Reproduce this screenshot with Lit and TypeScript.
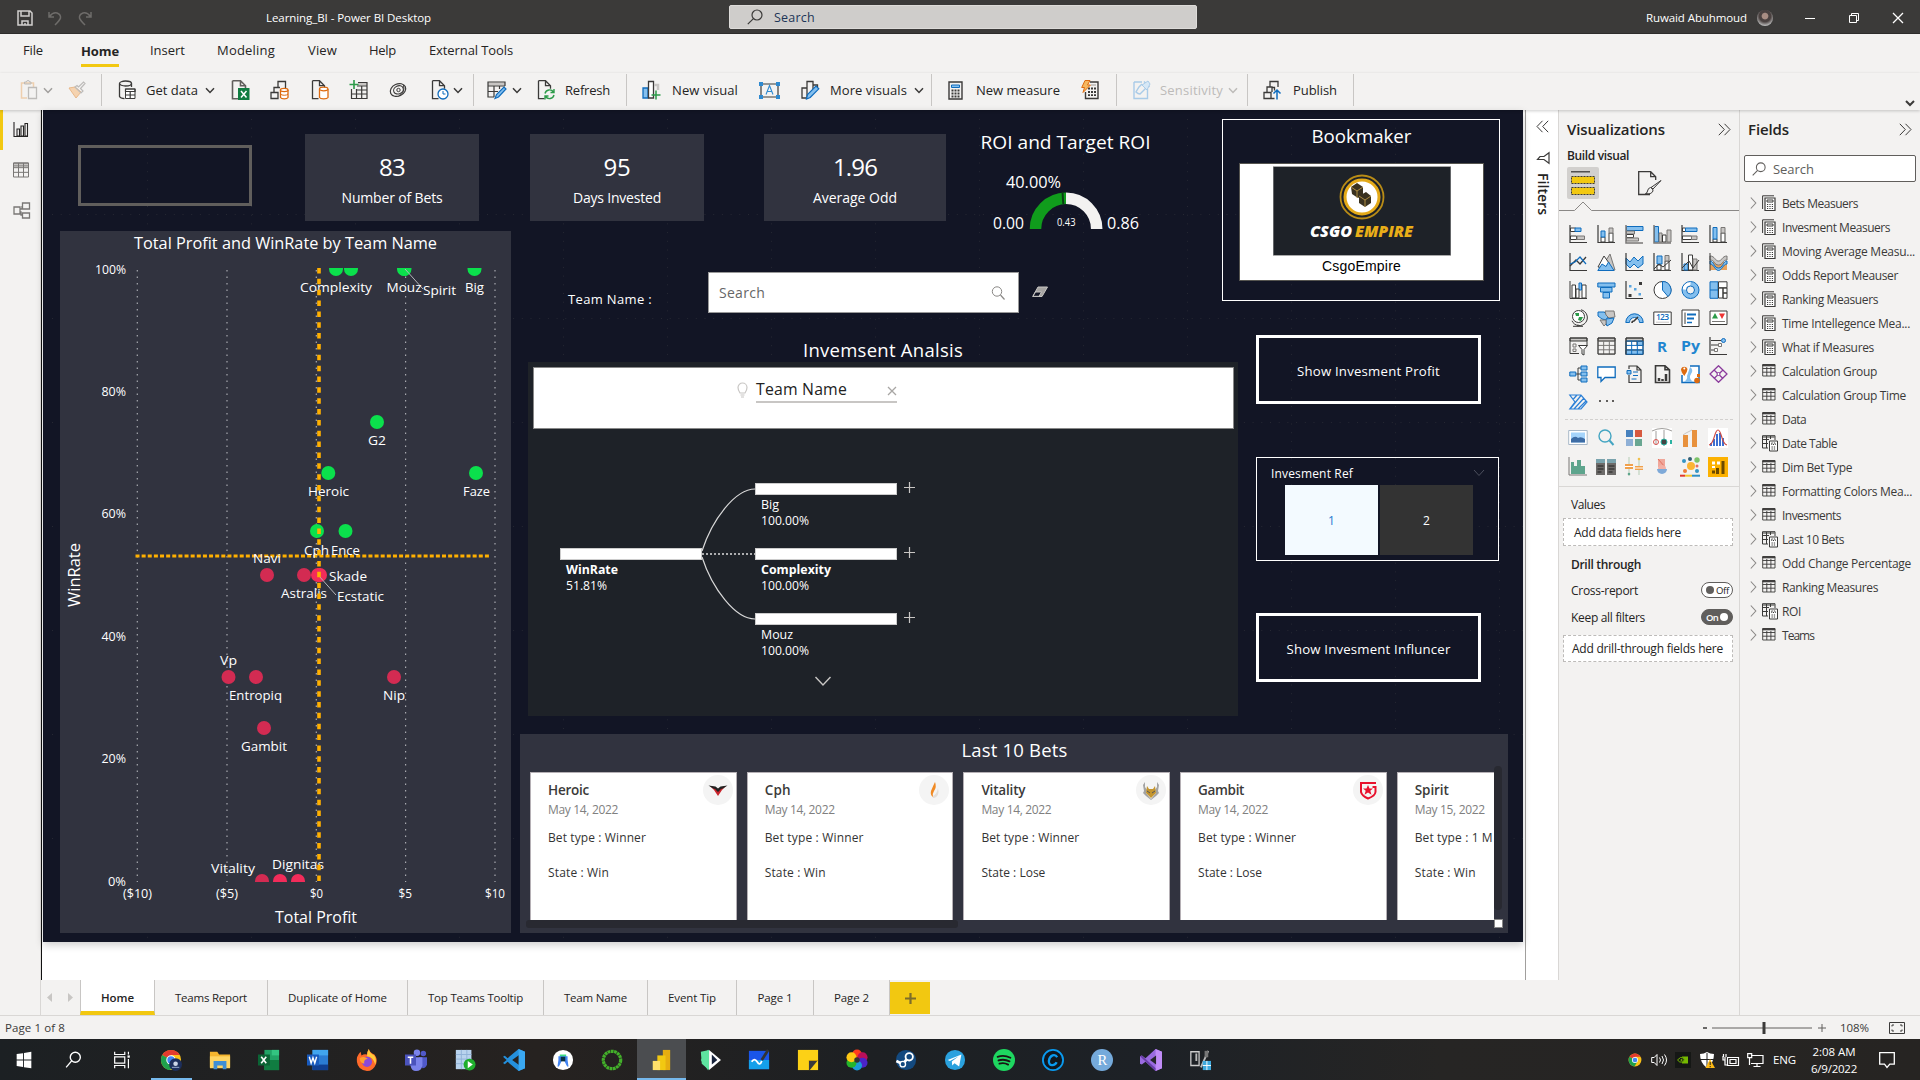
import { LitElement, html, svg, css, TemplateResult } from "lit";
import { customElement } from "lit/decorators.js";

type T = TemplateResult | TemplateResult<2>;

const K = "#3b3a39";
const B = "#0f6cbd";
const L = "#84bfee";
const G = "#c8c6c4";
const O = "#dd6b10";

/** Text whose advance is fitted to a measured width. */
const t = (text: string, w: number, cls = "") => html`<span class="t ${cls}" data-w=${w}>${text}</span>`;

/** Text inside a drawing: left edge, vertical centre, width, size. */
const st = (x: number, cy: number, w: number, text: string, fs = 13, cls = "") =>
  svg`<text class="st ${cls}" x=${x} y=${cy + fs * 0.355} font-size=${fs} textLength=${w} lengthAdjust="spacingAndGlyphs">${text}</text>`;

const ico = (w: number, h: number, body: unknown, cls = "") =>
  html`<svg class="ico ${cls}" width=${w} height=${h} viewBox="0 0 ${w} ${h}" fill="none" stroke=${K}>${body}</svg>`;

/** Row of cells, each reaching to the start of the next one. */
const cells = (start: number, items: [number, unknown][], end: number) => [
  html`<div class="cell" style="width:${items[0][0] - start}px"></div>`,
  ...items.map(([x, c], i) => html`<div class="cell" style="width:${(i + 1 < items.length ? items[i + 1][0] : end) - x}px">${c}</div>`),
];

const chev = (c = K) => ico(10, 7, svg`<path d="M1 1.2 5 5.4 9 1.2" stroke=${c} stroke-width="1.5"/>`);
const sep = html`<div class="sep"></div>`;
const glass = (s: number, c: string) => html`<svg class="ico" width=${s} height=${s} viewBox="0 0 16 16" fill="none" stroke=${c} stroke-width="1.2"><circle cx="10" cy="6" r="5"/><path d="M6.4 9.6 .8 15.2"/></svg>`;

const doc = svg`<path d="M1.5.7h7l5 5v3M1.5.7v18h6M8.5.7v5h5" stroke-width="1.3"/>`;
const grid = (x: number, y: number, w: number, h: number) =>
  svg`<path d="M${x} ${y}h${w}v${h}h${-w}zM${x} ${y + h / 3}h${w}M${x} ${y + (2 * h) / 3}h${w}M${x + w / 3} ${y}v${h}M${x + (2 * w) / 3} ${y}v${h}"/>`;

const tb = {
  paste: ico(18, 20, svg`<path d="M7 18H1.5V3H13.500v4" stroke="#eecfae" stroke-width="1.5"/><path d="M4.500 4V2h2a1.500 1.500 0 0 1 3 0h1.500v2z" stroke="#bdbbb9"/><path d="M8.500 7.500h8v11h-8z" stroke="#bdbbb9" stroke-width="1.300"/>`),
  brush: ico(18, 18, svg`<path d="M1 7 8 17l5-6-6-5z" fill="#f5d3b0" stroke="#e9b98a"/><path d="m7 6 6 6 2-2-2.500-2.500L17 2.500 15.500 1 10.500 6 9 4.500z" stroke="#bdbbb9" stroke-width="1.200"/>`),
  data: ico(18, 20, svg`<ellipse cx="7.500" cy="3.500" rx="6" ry="2.500" stroke-width="1.300"/><path d="M1.500 3.500v13q1 2 5 2.200M13.500 3.500V7" stroke-width="1.300"/><path d="M7.500 9h9.500v9.500H7.500z" fill="#fff"/><path d="M7.500 9h9.500v2.500H7.500zM7.500 15h9.500M12.200 11v7.500" stroke-width="1.200"/>`),
  excel: ico(19, 20, svg`<path d="M1.500.8h8l5 5v3M1.500.8v18h6M9.500.8v5h5" stroke="#605e5c" stroke-width="1.600"/><path d="M7 8h11.500v12H7z" fill="#107c41" stroke="none"/><path d="m10 11 5.500 6.500M15.500 11 10 17.500" stroke="#fff" stroke-width="1.500"/>`),
  hub: ico(19, 20, svg`<path d="M8 7V1.500h7.500V8M4 13V7.500h6M1 12.500h7v6H1z" stroke-width="1.300"/><path d="M10.500 10v7.500c1 1.700 6.500 1.700 7.500 0V10" fill="#fff" stroke=${O} stroke-width="1.300"/><ellipse cx="14.200" cy="10" rx="3.800" ry="1.600" stroke=${O} stroke-width="1.300" fill="#fff"/><path d="M10.500 14c1 1.700 6.500 1.700 7.500 0" stroke=${O}/>`),
  sql: ico(18, 20, svg`${doc}<path d="M8.500 9v8.500c1 1.700 7.500 1.700 8.500 0V9" fill="#fff" stroke=${O} stroke-width="1.300"/><ellipse cx="12.700" cy="9" rx="4.200" ry="1.800" stroke=${O} fill="#fff" stroke-width="1.300"/>`),
  enter: ico(19, 20, svg`<path d="M9 2.500h9v3H9z" fill=${G} stroke="none"/><path d="M9 2.500h9v16H2.500V9M2.500 14H18M7 10h11M8 6h10M7.500 9v9.500M12.700 6v12.500" stroke-width="1.200"/><path d="M5 0v9M.5 4.500h9" stroke="#2c9b49" stroke-width="1.600"/>`),
  verse: ico(19, 16, svg`<ellipse cx="9" cy="8" rx="8" ry="6" transform="rotate(-25 9 8)" stroke-width="1.200"/><ellipse cx="9.500" cy="8" rx="5" ry="4" transform="rotate(-25 9 8)" stroke-width="1.100"/><circle cx="9.500" cy="8" r="1.700"/><path d="M14.500 3q2 8-5 11"/>`),
  recent: ico(18, 20, svg`${doc}<circle cx="12" cy="14" r="5" stroke=${B} fill="#fff" stroke-width="1.300"/><path d="M12 11v3h2.500" stroke=${B}/>`),
  transform: ico(20, 20, svg`<path d="M1 2.500h17v3H1z" fill=${G} stroke="none"/><path d="M18 6V2H1v15h6M1 6h17M1 11.500h10M7 6v11M12.500 6v3" stroke-width="1.200"/><path d="m8 18.500 1.500-4L17 7l2 2-7.500 8z" fill=${L} stroke=${B} stroke-width="1.200"/>`),
  refresh: ico(18, 20, svg`${doc}<path d="M8 13.500a4.700 4.700 0 0 1 8.500-1.500M17 9v3.500h-3.500M17 15a4.700 4.700 0 0 1-8.500 1.500M8 19.500V16h3.500" stroke="#2c9b49" stroke-width="1.400"/>`),
  visual: ico(19, 20, svg`<path d="M1 8h5v10H1z" fill=${L} stroke=${B} stroke-width="1.300"/><path d="M6.500 1.500h5V18h-5z" fill="#fff" stroke-width="1.300"/><path d="M12 5h4v5" stroke=${G} stroke-width="2.500"/><path d="M14 10.500v9M9.500 15h9" stroke="#2c9b49" stroke-width="1.500"/>`),
  textbox: ico(21, 17, svg`<path d="M2 2h17v13H2z" stroke-width="1.200"/><path d="M0 0h4v4H0zM17 0h4v4h-4zM0 13h4v4H0zM17 13h4v4h-4z" fill="#2f8ad0" stroke="none"/><path d="m7 12.500 3.500-9 3.500 9M8.300 9.500h4.500" stroke="#2f8ad0" stroke-width="1.100"/>`),
  more: ico(19, 20, svg`<path d="M6 18H1V8h5zM6 18V1.500h6V10M12 5h4.500v3" stroke-width="1.300"/><path d="m5.500 19 1-4.500L15 6l2.800 2.800-8.600 8.700z" fill=${L} stroke=${B} stroke-width="1.200"/>`),
  calc: ico(15, 19, svg`<path d="M1 1h13v17H1z" stroke-width="1.400"/><path d="M3.500 4h8v2.500h-8z" fill=${L} stroke=${B}/><path d="M3.500 9.500h8M3.500 12.500h8M3.500 15.500h8" stroke-width="1.800" stroke-dasharray="2 1"/>`),
  quick: ico(18, 20, svg`<path d="M9 2h8v16.500H4.500V12" stroke-width="1.400"/><path d="M7 8.500h8M7 12h8M7 15.200h8" stroke-width="1.800" stroke-dasharray="2 1"/><path d="M10 5h5" stroke=${G} stroke-width="2"/><path d="M4 .5h5L6.500 5h3L2 12.500l1.500-5H.7z" fill="#f6b860" stroke=${O}/>`),
  sens: ico(18, 20, svg`<path d="M1 2h8M1 2v16.500h13.500V9M11 1.500l5.500 5.500M9 4 6 7l-3 5q2 2 4 2l6-6" stroke="#a9cbe8" stroke-width="1.400"/><path d="m9 5 5 5 3-6-2-3z" stroke="#a9cbe8" fill="#d7e8f6"/>`),
  publish: ico(19, 20, svg`<path d="M7 7V1.500h8V7M4 13V7h5v5M1 12.500h7v6H1zM8.500 18.500h3M8.500 7.500h3v3" stroke-width="1.300"/><path d="M14 19.500v-9M10.500 13.500 14 10l3.500 3.500" stroke=${B} stroke-width="1.500"/>`),
};

const ax = svg`<path d="M1 0v17.500h17" stroke-width="1.200"/>`;
const bw = (d: string) => svg`<path d=${d} fill="#fff"/>`;
const bl = (d: string) => svg`<path d=${d} fill=${L} stroke=${B}/>`;
const gr = (d: string) => svg`<path d=${d} fill=${G} stroke="#797775"/>`;
const vizIcons: T[] = [
  svg`${ax}${bw("M1.500 3h5v3.500h-5zM1.500 11h6v3.500h-6z")}${bl("M6 3h6v3.500H6z")}${gr("M8 11h7.500v3.500H8z")}`,
  svg`${ax}${bw("M4 12h4v5H4zM12 8h4v9h-4z")}${bl("M4 6h4v6H4z")}${gr("M12 3h4v5h-4z")}`,
  svg`${bl("M1.500 1.500H18v4H1.500z")}${gr("M1.500 6h8v3h-8z")}${bw("M1.500 9.500h7v3h-7z")}${gr("M1.500 13h12v3h-12z")}<path d="M1 0v18h17" stroke="#797775" stroke-width="1.500"/>`,
  svg`${bl("M1.500 1.500h4V17h-4z")}${gr("M6 8h3v9H6z")}${bw("M9.500 10H13v7H9.500z")}${gr("M14 5h4v12h-4z")}<path d="M1 0v18h17" stroke="#797775" stroke-width="1.500"/>`,
  svg`${ax}${bw("M1.500 3h3v3.500h-3zM1.500 11h9v3.500h-9z")}${bl("M4.500 3H16v3.500H4.500z")}${gr("M10.500 11H16v3.500h-5.500z")}`,
  svg`${ax}${bw("M4 14h4v3H4zM12 8h4v9h-4z")}${bl("M4 2.500h4V14H4z")}${gr("M12 2.500h4V8h-4z")}`,
  svg`${ax}<path d="m1 13 6-6 4 4 6-7" stroke-width="1.300"/><path d="m1 11 5-2 5-5 6 7" stroke=${B} stroke-width="1.200"/>`,
  svg`${gr("M8 9 13 1l5 16h-6z")}<path d="M1 14 7 3l5 7-4 5z" fill="#fff"/>${bl("M.8 17.500 5 11l4 2.500L11.500 9l5.500 8.500z")}`,
  svg`${bl("m1 5 4 4 4-5 4 4 5-5v8l-5 4-4-4-4 4-4-4z")}${ax}`,
  svg`${ax}${bl("M4 3h5v8H4z")}${bw("M4 12h4v5H4zM12 8h4v9h-4z")}${gr("M12 2.500h4V8h-4z")}<path d="m1 16 5-5 4 3 8-7"/>`,
  svg`${ax}${bl("M3 11h4v6H3z")}${bw("M7.500 2h4v15h-4z")}${gr("M12 6h4v11h-4z")}<path d="m1 15 7-7 4 7 6-8"/>`,
  svg`<path d="M1 9h17v8H1z" fill="#e8a25c" stroke="none"/><path d="M1 3c5 0 5 5 8.500 5S13 3 18 3v4c-5 0-4 5-8.500 5S6 7 1 7z" fill=${G} stroke="#797775"/><path d="M1 8c4 0 4 7 8.500 7S14 8 18 8v3c-4 0-5 6.500-8.500 6.500S5 11 1 11z" fill=${L} stroke=${B}/><path d="M1 0v18"/>`,
  svg`<path d="M1 0v17.500h17"/>${bw("M3 4h3.500v13H3zM13 4h4v13h-4z")}${bl("M10 2h2.500v7H10z")}${bw("M7 8h3v9H7z")}`,
  svg`${bl("M.8 2H18v4H.8zM3.500 6.500h11.500v4.500H3.500zM6 11.500h6.500V17H6z")}`,
  svg`${ax}<path d="M3.500 13h3v3h-3zM14 1h3v3h-3z" fill=${K} stroke="none"/><path d="M4 4h2.500v2.500H4zM9 7h2.500v2.500H9zM13.500 12H16v2.500h-2.500z" fill="#5aa5e0" stroke="none"/>`,
  svg`<circle cx="9.500" cy="9" r="8.500" fill="#fff"/>${bl("M9.500.5A8.500 8.500 0 0 1 15 15.500L9.500 9z")}`,
  svg`<circle cx="9.500" cy="9" r="6.300" stroke=${L} stroke-width="4.500"/><path d="M9.500 2.500A6.500 6.500 0 0 0 3 8.500" stroke="#fff" stroke-width="4"/><circle cx="9.500" cy="9" r="8.500" stroke=${B}/><circle cx="9.500" cy="9" r="4" stroke=${B}/>`,
  svg`${bl("M1 .8h8v16.500H1z")}${bw("M9.500.8H18v6H9.500zM9.500 7h4.500v10H9.500zM14 7h4v5h-4zM14 12h4v5.300h-4z")}<path d="M1 9h8" stroke=${B}/>`,
  svg`<circle cx="9.500" cy="7.500" r="6" fill="#fff"/><path d="M6 4h4v3H7zM10 8h4l-2 4-3-1z" fill="#2c9b49" stroke="none"/><path d="M12 .8a8 8 0 1 1-9 11M4 17.300h10M9 15.500v2"/>`,
  svg`${bl("M1 3h6l2 2 2 3-2 3-4-1-4-3z")}${gr("M8 2h9l1 6-6 1-3-3z")}${bl("M9 10l8-1-2 5-5 3-1-3z")}${gr("M3 11h6v4l-2 2z")}`,
  svg`<path d="M2.500 13.500a7 7 0 0 1 14 0" stroke=${L} stroke-width="4"/><path d="M.8 13.500a8.700 8.700 0 0 1 17.400 0h-3.700a5 5 0 0 0-10 0z" stroke=${B}/><path d="M7 14q0-2 2-2l4-4" stroke-width="1.600"/>`,
  svg`<path d="M.8 3h17.400v12.500H.8z" fill="#fff"/><text x="3" y="11" font-size="8.500" font-weight="600" textLength="13" fill=${B} stroke="none" font-family="Open Sans">123</text><path d="M3 13.200h13" stroke=${G}/>`,
  svg`<path d="M1 1h17v16.500H1z" fill="#fff"/><path d="M4 3.500v11.500"/><path d="M6 5.500h9M6 9.500h7" stroke=${B} stroke-width="2"/><path d="M6 13.500h5" stroke=${B} stroke-width="1.500"/>`,
  svg`<path d="M1 2h17v13.500H1z" fill="#fff"/><path d="M3 9.500 6 4l3 5.500z" fill="#2c9b49" stroke="none"/><path d="M10 4.500h6l-3 5.500z" fill="#e33" stroke="none"/><path d="M3 12.500h13" stroke="#797775"/>`,
  svg`<path d="M1 1h17v3H1z" fill=${G}/><path d="M1 1h17v7M1 1v15.500h9" /><path d="M4 7h3v3H4zM4 12h3v2.500H4z" stroke="#797775"/><path d="M9.500 8.500h9l-3.500 4V18l-2-1v-4.500z" fill="#fff"/>`,
  svg`<path d="M1 1h17v3H1z" fill=${G}/><g stroke="#797775">${grid(1, 4, 17, 13.2)}</g><path d="M1 1h17v16H1z" />`,
  svg`<path d="M1 4h17v13.500H1z" fill="#fff"/><path d="M12 4h6v4.500h-6zM6.500 13h11.500v4.500H1V13z" fill=${L}/><path d="M1 1h17v3H1z" fill=${G}/><g stroke=${B}>${grid(1, 4, 17, 13.2)}</g><path d="M1 17.500V1h17v3" />`,
  svg`<text x="4" y="14.500" font-size="15" font-weight="700" textLength="10" lengthAdjust="spacingAndGlyphs" fill="#1f86d0" stroke="none" font-family="Open Sans">R</text>`,
  svg`<text x="0" y="13.500" font-size="15" font-weight="700" textLength="19" lengthAdjust="spacingAndGlyphs" fill="#1f86d0" stroke="none" font-family="Open Sans">Py</text>`,
  svg`<path d="M1 0v17.500h17" stroke-width="1.200"/><path d="M2 3.500h10M2 8h7M2 13h3"/><circle cx="14.500" cy="3.500" r="2" fill=${L} stroke=${B}/><path d="M9.500 6.500h3v3h-3zM5.500 11.500h3v3h-3z" fill="#fff" stroke="#797775"/>`,
  svg`<path d="M6 9h6M9 3h3M9 15h3M9 3v12"/>${bl("M.8 7h6v4h-6zM12 1h6v4h-6zM12 7h6v4h-6zM12 13h6v4h-6z")}`,
  svg`<path d="M.8 2h17.400v10.500H8L4 16.500v-4H.8z" fill="#fff" stroke=${B} stroke-width="1.300"/>`,
  svg`<path d="M4 4V1h8l4 4v12.500H4V10M12 1v4h4" stroke-width="1.200"/><path d="M2 5.500h4v3.500H2z" fill=${L} stroke=${B}/><path d="M8 7h5M8 10.500h5M6.500 14h5" stroke=${B}/>`,
  svg`<path d="M2.500.8H12l4.500 4v12.700h-14zM12 .8v4h4.500" stroke-width="1.600"/><path d="M6 16v-3M9.500 16v-2M13 16V9" stroke-width="2.500"/>`,
  svg`<path d="M9 1h9v16.500H1V10" fill="#fff" stroke=${B} stroke-width="1.500"/><path d="M9 2q4 3 1 7t2 8H3q4-3 3-6z" fill=${L} stroke="none"/><path d="M0 4a3.500 3.500 0 0 1 6.500 0q0 3-3.200 7Q0 7 0 4z" fill=${O} stroke="none"/><circle cx="3.300" cy="3.500" r="1" fill="#fff" stroke="none"/><circle cx="16" cy="15.500" r="2.800" fill=${O} stroke="none"/><path d="M16 9h3v3h-3z" fill=${O} stroke="none"/>`,
  svg`<path d="m9.500.8 8.500 8.200-8.500 8.200L1 9z" stroke="#8a3a9c" stroke-width="1.300" stroke-linejoin="round"/><path d="m5 5 9 8.500M14 5l-9 8.500" stroke="#8a3a9c" stroke-width="1.200"/><circle cx="9.500" cy="9" r="1.500" fill="#fff" stroke="#8a3a9c"/>`,
  svg`<path d="M.8 2H12l6 7-6 7H.8L6 9zM1 16 12 2.500M5 16 15 5M9 16l8-8M4 6.500 8 2" stroke="#2a7fd6" stroke-width="1.200"/>`,
  svg`<path d="M2 8h2M9 8h2M15 8h2" stroke="#605e5c" stroke-width="1.800"/>`,
];

const customIcons: T[] = [
  svg`<path d="M.7 2.500h18.500v14H.7z" fill="#fff" stroke="#a8b8c8"/><path d="M3 4.500h14v10H3z" fill="#a5d4fb" stroke="none"/><path d="M3 11q4-4 7-1 3-2 7 1v3.500H3z" fill="#3d6ca5" stroke="none"/>`,
  svg`<circle cx="9" cy="8" r="6" stroke="#44a5c2" stroke-width="1.400"/><path d="m13.500 12.500 4 4.500" stroke="#44a5c2" stroke-width="2"/>`,
  svg`<path d="M2 2h7v7H2z" fill="#4781bd" stroke="none"/><path d="M11 2h7v7h-7z" fill="#d7593f" stroke="none"/><path d="M2 11h7v7H2z" fill="#8fb0d6" stroke="none"/><path d="M11 11h7v7h-7z" fill="#69a691" stroke="none"/>`,
  svg`<path d="M0 0h20v20H0z" fill="#fff" stroke="none"/><path d="M0 3q10-5 20 0M4 3v14M12 2v16" stroke="#a19f9d"/><circle cx="4" cy="14" r="2.500" stroke="#d9534f"/><circle cx="12" cy="14" r="3" fill="#444" stroke="#2bb3a3"/><path d="M19 12v4" stroke="#2bb3a3" stroke-width="2"/>`,
  svg`<path d="M3 7h5v12H3zM12 2h5v17h-5z" fill="#e8913d" stroke="none"/><path d="M3 7l3-2 6-3" stroke=${G}/>`,
  svg`<path d="M0 0h20v20H0z" fill="#fff" stroke="none"/><path d="M3 18v-3M6 18v-7M9 18V6M12 18V5M15 18v-8" stroke="#3c6fd1" stroke-width="2"/><path d="M1 17C7 16 6 2 10 2s3 14 9 15" stroke="#cf4a43" stroke-width="1.200"/>`,
  svg`<path d="M3 17V5h3v4h3V3h4v6h4v8z" fill="#5ea58d" stroke="none"/><path d="M1 0v18h18" stroke="#797775"/>`,
  svg`<path d="M0 2h9v16H0zM11 2h9v16h-9z" fill="#6d6b69" stroke="none"/><path d="M0 2h9v4H0zM11 2h9v4h-9z" fill="#7aa3ad" stroke="none"/><path d="M1.500 9h6M1.500 12h6M1.500 15h4M12.500 9h6M12.500 12h6M12.500 15h4" stroke="#222"/>`,
  svg`<path d="M5 0v19M15 2v16" stroke="#b5cdb5"/><path d="M1 7h8v5H1zM11 9h8v4h-8z" fill="#f0a04c" stroke="none"/><path d="M1 9.500h8M11 11h8" stroke="#fff"/><circle cx="5" cy="17" r="1.300" fill="#5ea58d" stroke="none"/><circle cx="15" cy="2" r="1.300" fill="#f0c04c" stroke="none"/>`,
  svg`<path d="M6 2h7v8H6z" fill="#f0a79a" stroke="none"/><path d="m6 2 7 8" stroke="#e5705f"/><circle cx="10" cy="12" r="4" fill="#f3b0a6" stroke="none"/><path d="M5 12a5 5 0 0 0 10 0z" fill="#7ea9d8" stroke="none"/>`,
  svg`<circle cx="11" cy="9" r="4" fill="#fbb534" stroke="none"/><circle cx="4" cy="4" r="2" fill="#3595c4" stroke="none"/><circle cx="10" cy="2" r="2" fill="#335f74" stroke="none"/><circle cx="17" cy="3" r="2.700" fill="#7cc36a" stroke="none"/><circle cx="17" cy="9" r="1.500" fill="#e5705f" stroke="none"/><circle cx="5" cy="14" r="2" fill="#ef7c36" stroke="none"/><circle cx="17" cy="14" r="2" fill="#3595c4" stroke="none"/><path d="M0 18.700h5" stroke="#e03b2e" stroke-width="2"/><path d="M5 18.700h7" stroke="#f7c82f" stroke-width="2"/><path d="M12 18.700h8" stroke="#2f8fc4" stroke-width="2"/>`,
  svg`<path d="M0 0h20v20H0z" fill="#fcb100" stroke="none"/><path d="M4 6h3M9 6h3" stroke="#fff" stroke-width="3"/><path d="M4 10h3" stroke="#fff" stroke-width="2"/><path d="M4 15h3M9.500 17v-6M15 17V4" stroke="#6b4a00" stroke-width="3"/>`,
];

const fieldRows: [string, number, number][] = [
  ["Bets Measuers", 76, 0], ["Invesment Measuers", 108, 0], ["Moving Average Measu...", 133, 0], ["Odds Report Meauser", 116, 0],
  ["Ranking Measuers", 96, 0], ["Time Intellegence Mea...", 128, 0], ["What if Measures", 92, 0], ["Calculation Group", 95, 1],
  ["Calculation Group Time", 124, 1], ["Data", 24, 1], ["Date Table", 55, 2], ["Dim Bet Type", 70, 1], ["Formatting Colors Mea...", 130, 1],
  ["Invesments", 59, 1], ["Last 10 Bets", 62, 2], ["Odd Change Percentage", 129, 1], ["Ranking Measures", 96, 1], ["ROI", 19, 2], ["Teams", 32, 1],
];
const tblP = svg`<path d="M.8 1.800h12v1h-12z" fill=${K}/><path d="M.7 1.500h12.300v11.500H.7zM.7 5.500H13M.7 9.200H13M4.800 4v9M8.900 4v9" stroke-width=".9"/>`;
const fieldIcons: T[] = [
  svg`<path d="M.6 14V.8H12"/><path d="M3 3h10v12.500H3z" fill="#fff" stroke-width="1.200"/><path d="M5 5h6v2H5z"/><path d="M5 9.500h6M5 11.500h6M5 13.500h6" stroke-dasharray="1.200 1.200"/>`,
  tblP,
  svg`<path d="M6 13H.5V.7H13V5M.5 4.500H7M.5 8.500H6M4.500 1v12M8.500 1v3M.5 2h12" /><path d="M7.500 6h8v10h-8z" fill="#fff"/><path d="M9.500 8h4v1.500h-4zM9.500 12h4M9.500 14h4" stroke-dasharray="1.300 1"/>`,
];

const X0 = 60, Y0 = 231;
const dots: [number, number, string][] = [
  [336, 269, "g"], [351, 269, "g"], [404, 269, "g"], [404.500, 269, "g"], [474.500, 269, "g"], [377, 422, "g"], [328.300, 473, "g"], [476, 473, "g"],
  [317, 531, "g"], [345.500, 531, "g"], [267, 575, "r"], [304, 575, "r"], [318, 575, "b"], [320, 575, "b"], [228.500, 677, "r"], [256, 677, "r"],
  [394, 677, "r"], [264, 728, "r"], [262, 881, "r"], [280, 881, "b"], [298, 881, "b"],
];
const dotLabels: [number, number, number, string][] = [
  [300, 288, 72, "Complexity"], [386.500, 288, 35, "Mouz"], [423, 291, 33, "Spirit"], [465, 288, 19, "Big"], [368, 441, 18, "G2"],
  [308, 492, 41, "Heroic"], [463, 492, 27, "Faze"], [304, 551, 25, "Cph"], [331, 551, 29, "Ence"], [253, 559, 28, "Navi"],
  [329, 577, 38, "Skade"], [281, 594, 46, "Astralis"], [337, 597, 47, "Ecstatic"], [220, 661, 17, "Vp"], [229, 696, 53, "Entropiq"],
  [383, 696, 22, "Nip"], [241, 747, 46, "Gambit"], [211, 869, 44, "Vitality"], [272, 865, 52, "Dignitas"],
];
const bets: [string, number, string, number, string, number, string, number, T][] = [
  ["Heroic", 41, "May 14, 2022", 70, "Bet type : Winner", 98, "State : Win", 61,
    svg`<path d="m7 11 4 1 4 3 4-3 4-1-4 4-4 6-4-6z" fill="#c9242c" stroke="none"/><path d="m5.500 10.500 7 1 2.500 2 2.500-2 7-1-4.500 3-2 .5-3 3-3-3-2-.5z" fill="#222" stroke="none"/>`],
  ["Cph", 26, "May 14, 2022", 70, "Bet type : Winner", 99, "State : Win", 61,
    svg`<path d="M16 7q2 5-1 9-2 3-1 6-3-2-2-6 2-5 4-9z" fill="#f08a24" stroke="none"/><path d="M19 13q2 8-4 10-2 0-1-2 4-2 5-8z" fill="#e4ddd6" stroke="none"/>`],
  ["Vitality", 44, "May 14, 2022", 70, "Bet type : Winner", 98, "State : Lose", 64,
    svg`<path d="M9 7v5l2 3-1 3 5 6 5-6-1-3 2-3V7l2 3-1 6 1 2-3 3-5 4-5-4-3-3 1-2-1-6z" fill="#a3a3a3" stroke="none"/><path d="M11 11l2 3h4l2-3 1 7-5 5-5-5z" fill="#c4952f" stroke="none"/><path d="m11 16 3 2M19 16l-3 2" stroke="#555"/>`],
  ["Gambit", 46, "May 14, 2022", 70, "Bet type : Winner", 98, "State : Lose", 64,
    svg`<path d="M23 8H8v9q1 4 7 6.500Q22 21 22.500 17v-5h-3" stroke="#e8112d" stroke-width="2"/><path d="m15 10 1.500 3.500h3.500l-2.700 2.300 1.200 4-3.500-2.300-3.500 2.300 1.200-4L10 13.500h3.500z" fill="#e8112d" stroke="none"/>`],
  ["Spirit", 34, "May 15, 2022", 70, "Bet type : 1 M", 78, "State : Win", 61, svg``],
];

const pages: [string, number, number][] = [
  ["Home", 33, 75], ["Teams Report", 72, 113], ["Duplicate of Home", 99, 140], ["Top Teams Tooltip", 95, 136], ["Team Name", 63, 104],
  ["Event Tip", 48, 89], ["Page 1", 35, 77], ["Page 2", 35, 76],
];

const W = "#fff";
const f = (d: string, c: string) => svg`<path d=${d} fill=${c} stroke="none"/>`;
const chrome = (extra: unknown = "") => svg`<circle cx="12" cy="12" r="11" fill="#fbc116" stroke="none"/>${f("M12 12 2.500 6.500A11 11 0 0 1 21.500 6.500H12z", "#e33b2e")}${f("M12 12 2.500 6.500A11 11 0 0 0 11 23l5.500-9z", "#1fa04d")}<circle cx="12" cy="12" r="5.200" fill="#fff" stroke="none"/><circle cx="12" cy="12" r="4" fill="#4285f4" stroke="none"/>${extra}`;
const apps: T[] = [
  svg`${f("M4 5.500 11 4.500V11.500H4zM12 4.300 20 3v8.500h-8zM4 12.500h7v7L4 18.500zM12 12.500h8V21l-8-1.200z", W)}`,
  svg`<circle cx="14.500" cy="9" r="5.500" stroke="#fff" stroke-width="1.500"/><path d="m10.500 13-6 7" stroke="#fff" stroke-width="1.500"/>`,
  svg`<path d="M4 3v3h11V3M4 21v-3h11v3M4 8.500h11v7H4zM19 3v3M19 11v10" stroke="#fff" stroke-width="1.300"/><path d="M18 7h2.500v2.500H18z" fill="#fff" stroke="none"/>`,
  chrome(svg`<circle cx="17" cy="17" r="7" fill="#1d2f5c" stroke="none"/><circle cx="17" cy="16" r="2.500" fill="#cdd6e8" stroke="none"/><path d="M13 20h8" stroke="#9fb2d8"/>`),
  svg`${f("M1 3h8l2 3h12v14H1z", "#f5b52e")}${f("M1 8h22v13H1z", "#ffd563")}${f("M5 13h14v9h-4v-4H9v4H5z", "#3f8fd6")}`,
  svg`${f("M7 1h16v22H7z", "#21a366")}${f("M15 1h8v6h-8z", "#33c481")}${f("M7 12h16v11H7z", "#107c41")}${f("M0 6h13v12H0z", "#0b6435")}<path d="m3.500 8.500 5.500 7M9 8.500l-5.500 7" stroke="#fff" stroke-width="1.700"/>`,
  svg`${f("M6 1h17v22H6z", "#2b7cd3")}${f("M6 1h17v6H6z", "#41a5ee")}${f("M6 17h17v6H6z", "#103f91")}${f("M0 6h13v12H0z", "#185abd")}<path d="m2.500 8.500 2 7 2-6 2 6 2-7" stroke="#fff" stroke-width="1.500"/>`,
  svg`${f("M14 0q1 4 6 6 4 5 2 10-3 8-10 8Q2 23 1 14 0 8 5 3l1 4q3-2 6-1 0-3 2-6z", "#ff6a2a")}${f("M14 0q1 5 6 7 3 5 1 10-2-8-9-9 0-5 2-8z", "#ffcb3a")}<circle cx="12" cy="14" r="5.500" fill="#8a49d8" stroke="none"/>${f("M4 10q5-3 9 1-5 0-4 5-5-1-5-6z", "#ffa12e")}`,
  svg`<circle cx="20" cy="5" r="3" fill="#5059c9" stroke="none"/><circle cx="13" cy="4" r="3.500" fill="#7b83eb" stroke="none"/>${f("M15 9h9v8q-1 4-5 4z", "#5059c9")}${f("M6 9h13v9q-1 6-7 6-5 0-6-6z", "#7b83eb")}${f("M0 6h12v12H0z", "#4b53bc")}<path d="M3 9h6M6 9v7" stroke="#fff" stroke-width="1.700"/>`,
  svg`${f("M2 1h17v21H2z", "#b9d3ee")}<path d="M2 6h17M2 11h17M2 16h17M8 1v21M14 1v21" stroke="#8fb1d6"/><circle cx="17" cy="17" r="6.500" fill="#1fae2c" stroke="none"/>${f("m15 13 5.500 4-5.500 4z", W)}`,
  svg`${f("M17 0 24 3v18l-7 3L5 14l-3 2.500-2-1.200L4 12 0 8.500l2-1.200L5 10zM17.500 6.500 10 12l7.500 5.500z", "#2490dd")}${f("M17 0 24 3v18l-7 3z", "#3aa8f2")}`,
  svg`<circle cx="12" cy="12" r="11" fill="#fff" stroke="none"/>${f("M8.500 6h7v3h-7z", "#3ddc84")}${f("M7 8h10v4l1 7h-1.500l-3-6h-3l-3 6H6l1-7z", "#4285f4")}${f("M9.500 8.500h5v5h-5z", "#073042")}`,
  svg`<circle cx="12" cy="12" r="9.500" stroke="#43b02a" stroke-width="3.500" stroke-dasharray="3 .6"/>`,
  svg`${f("M14 1h8v22h-8z", "#e6ad10")}${f("M8 7h9v16H8z", "#f2c811")}${f("M3 13h8v10H3z", "#ffe06a")}`,
  svg`${f("M2 12 10 0.500v23z", "#4ddb93")}${f("M2 3 11 1v22l-8-7z", "#5ee3a0")}${f("M11 1 24 12 11 23z", W)}${f("m14 6 6 6-6 5z", "#17223a")}`,
  svg`${f("M1 2h22v20H1z", "#1a55e8")}${f("M1 12h22v10H1z", "#14a0ea")}<path d="M4 14q3-5 6 0t5-1" stroke="#fff" stroke-width="2"/><path d="m15 12 7-11" stroke="#333" stroke-width="3"/>`,
  svg`${f("M1 1h22v22H1z", "#fcd116")}${f("M13 12h10L14 23h-1z", "#3a3a3a")}${f("M13 12h10v1H13z", "#d9a900")}`,
  svg`<circle cx="12" cy="6" r="5.500" fill="#ff3b1d" stroke="none"/><circle cx="18" cy="9" r="5.500" fill="#b90f5a" stroke="none"/><circle cx="18" cy="15" r="5.500" fill="#4b24c9" stroke="none"/><circle cx="12" cy="18" r="5.500" fill="#1a9bd8" stroke="none"/><circle cx="6" cy="15" r="5.500" fill="#25b52c" stroke="none"/><circle cx="6" cy="9" r="5.500" fill="#ffc814" stroke="none"/><circle cx="12" cy="12" r="3" fill="#333" stroke="none"/>`,
  svg`<circle cx="12" cy="12" r="11" fill="#13497f" stroke="none"/><circle cx="15.500" cy="8.500" r="4" stroke="#fff" stroke-width="2"/><path d="m1.500 13 7 3.500 4-5" stroke="#fff" stroke-width="3"/><circle cx="8.500" cy="16.500" r="3" fill="#13497f" stroke="#fff" stroke-width="1.500"/>`,
  svg`<circle cx="12" cy="12" r="11" fill="#2aa1de" stroke="none"/>${f("m4 12 15-6-2.500 13-5-3.500-2.500 2.500-.5-4.500L16 8l-9.500 5z", W)}`,
  svg`<circle cx="12" cy="12" r="12" fill="#1ed760" stroke="none"/><path d="M5 8.500q7-2.500 14 1M6 12.500q6-2 12 1M7 16q5-1.500 9.500 1" stroke="#191414" stroke-width="2" stroke-linecap="round"/>`,
  svg`<circle cx="12" cy="12" r="11" stroke="#0a9bf0" stroke-width="2" fill="#101820"/><path d="M16.500 9q-1.500-3-5-2-3.500 1.500-4 6 0 5 4 4.500 3 0 4.500-3" stroke="#0a9bf0" stroke-width="2.500"/>`,
  svg`<circle cx="12" cy="12" r="12" fill="#75aadb" stroke="none"/><text x="7" y="17.500" font-size="16" fill="#fff" stroke="none" font-family="Liberation Serif">R</text>`,
  svg`${f("M17 0 24 3v18l-7 3L6 14l-4 3-2-1V8l2-1 4 3z", "#9a6ae0")}${f("M17 0 24 3v18l-7 3z", "#c18cf7")}${f("M17.500 7 11 12l6.500 5z", "#26262b")}${f("M0 8l2-1 15 14v3z", "#6a3fa8")}`,
  svg`<path d="M2 3h9v15H2z" stroke="#ccc" stroke-width="1.400"/><path d="M13 20 21 2M8 5v8" stroke="#bbb" stroke-width="2"/><path d="M17 2h4v7h-4z" fill="#777" stroke="none"/>${f("M15 13h9v10h-9z", "#3fa9dd")}<path d="M15 18h9M19.500 13v10" stroke="#fff"/>`,
];

@customElement("app-root")
export class AppRoot extends LitElement {
  static styles = css`
    :host { display: block; width: 1920px; height: 1080px; overflow: hidden; font-family: "Open Sans", "Noto Sans", sans-serif; font-size: 11.5px; color: #252423; background: #f3f2f1; }
    * { box-sizing: border-box; }
    .t { white-space: nowrap; display: block; flex: none; }
    .ico { display: block; flex: none; overflow: visible; }
    .cell { flex: none; display: flex; align-items: center; }
    .row { display: flex; align-items: center; }
    .st { fill: #fff; font-family: "Open Sans", sans-serif; stroke: none; }
    .bold { font-weight: 700; }
    .semi { font-weight: 600; }
    .title { height: 34px; background: #3b3a39; border-bottom: 1px solid #2d2c2b; color: #fff; padding-top: 2px; }
    .tsearch { width: 468px; height: 24px; background: #cfcdcb; border: 1px solid #dddbd9; border-radius: 2px; color: #1d3557; padding-left: 17px; gap: 11px; margin-top: -1px; font-size: 12.5px; }
    .avatar { width: 16px; height: 16px; border-radius: 50%; background: radial-gradient(circle at 50% 38%, #a98d83 0 22%, #4a4140 30% 45%, #b9b9b9 75%); }
    .menu { height: 39px; font-size: 13px; padding-bottom: 7px; }
    .menu .cell { height: 32px; }
    .underlined { height: 31px; line-height: 30px; border-bottom: 3px solid #f2c811; margin-bottom: -2px; }
    .tools { height: 37px; font-size: 13px; padding-bottom: 3px; box-shadow: 0 1px 3px #0003; position: relative; z-index: 1; }
    .sep { width: 1px; height: 32px; background: #c8c6c4; }
    .dim { color: #bdbbb9; }
    .body { display: flex; height: 906px; border-bottom: 1px solid #d9d7d5; }
    .rail { width: 40px; display: flex; flex-direction: column; }
    .rail div { height: 40px; display: flex; align-items: center; padding-left: 13px; }
    .rail .on { border-left: 3px solid #f2c811; padding-left: 10px; }
    .center { width: 1519px; display: flex; flex-direction: column; }
    .work { display: flex; height: 870px; }
    .zone { width: 1486px; background: #fff; border-left: 1px solid #e1dfdd; border-right: 1px solid #a19f9d; }
    .zonein { height: 870px; border-left: 1px solid #111; padding-left: 1px; }
    .canvas { width: 1480px; height: 832px; background: #121525; display: flex; color: #fff; box-shadow: 0 3px 8px #0003; position: relative; }
    .specks { position: absolute; inset: 0; pointer-events: none; }
    .lcol { width: 468px; position: relative; }
    .lrow { height: 121px; display: flex; align-items: flex-start; padding-left: 35px; }
    .blank { width: 174px; height: 61px; margin-top: 35px; border: 3px solid #605e5c; }
    .kpi { width: 174px; height: 87px; margin-top: 24px; background: #31333f; display: flex; flex-direction: column; align-items: center; font-size: 14px; flex: none; padding-top: 15px; }
    .kpi .big { font-size: 24px; line-height: 36px; }
    .kpi .cap { line-height: 26px; }
    .shift { margin-left: 53px; }
    .wide { width: 182px; margin-left: 60px; }
    .scatter { display: block; margin-left: 17px; background: #31333f; }
    .rcol { width: 1012px; display: flex; flex-direction: column; position: relative; }
    .rowa { display: flex; height: 225px; }
    .atop { display: flex; height: 130px; padding-left: 19px; }
    .aleft { width: 711px; }
    .roi { display: block; flex: none; }
    .finder { padding-top: 32px; align-items: flex-start; }
    .finder .lab { padding-top: 18px; font-size: 13px; }
    .box { width: 311px; height: 41px; background: #fff; border: 1px solid #999; display: flex; align-items: center; color: #666; font-size: 14px; padding: 0 13px 0 10px; justify-content: space-between; }
    .erase { padding-top: 14px; }
    .book { width: 278px; height: 182px; margin-top: 9px; border: 1px solid #fff; display: flex; flex-direction: column; align-items: center; font-size: 18.7px; padding-left: 1px; }
    .book .hd { line-height: 31px; margin-bottom: 12px; }
    .bookin { width: 245px; height: 118px; background: #fff; border: 1px solid #55544f; display: flex; flex-direction: column; align-items: center; padding-top: 2px; color: #000; font: 14px "Liberation Sans", Arial, sans-serif; }
    .bookin .t { line-height: 20px; }
    .rowb { display: flex; height: 399px; padding-left: 17px; }
    .ana { width: 710px; }
    .ana .hd { font-size: 18.5px; display: flex; justify-content: center; height: 27px; line-height: 30px; }
    .tree { height: 354px; background: #1e2228; padding: 5px 4px 0 5px; }
    .thead { height: 62px; background: #fff; border: 1px solid #888; display: flex; padding: 14px 0 0 203px; color: #222; font-size: 15.8px; }
    .lvl { width: 141px; height: 21px; margin-left: 8px; border-bottom: 2px solid #c8c6c4; display: flex; align-items: center; justify-content: space-between; line-height: 15px; padding-bottom: 4px; }
    .treesvg { display: block; margin-left: -5px; }
    .side { margin-left: 18px; display: flex; flex-direction: column; font-size: 13.2px; }
    .btn { width: 225px; height: 69px; border: 3px solid #fff; display: flex; align-items: center; justify-content: center; padding-top: 3px; }
    .slicer { width: 243px; height: 104px; border: 1px solid #fff; margin: 53px 0 52px; padding: 3px 14px 0; font-size: 12px; }
    .slicer .row { justify-content: space-between; height: 24px; }
    .tiles { display: flex; gap: 2px; padding-left: 14px; }
    .tile { width: 93px; height: 70px; background: #333; display: flex; align-items: center; justify-content: center; flex: none; }
    .tile.sel { background: #f3faff; color: #1f7ad0; }
    .last { margin-left: 9px; width: 988px; height: 199px; background: #31333f; font-size: 18.5px; }
    .last .hd { height: 32px; line-height: 31px; display: flex; justify-content: center; padding-right: 0; margin-left: 1px; }
    .lbody { height: 162px; margin: 0 6px; padding: 6px 8px 8px 4px; position: relative; }
    .strip { display: flex; gap: 10.2px; overflow: hidden; height: 148px; }
    .bet { width: 206.500px; height: 148px; background: #fff; border: 1px solid #b5b0b5; border-bottom: none; flex: none; color: #333; padding: 7px 3px 0 17px; font-size: 12px; }
    .bet:last-child { width: 98px; border-right: none; padding-right: 0; }
    .bet:last-child .badge { display: none; }
    .bet .top { display: flex; justify-content: space-between; height: 20px; line-height: 20px; font-size: 13.500px; color: #3b3a39; }
    .bet .date { color: #808080; line-height: 18px; margin-top: 1px; }
    .bet .a { line-height: 18px; margin-top: 10px; }
    .bet .b { line-height: 18px; margin-top: 17px; }
    .badge { margin-top: -5px; }
    .hs { position: absolute; left: 0; bottom: 0; width: 432px; height: 8px; background: #282931; border-radius: 3px; }
    .vs { position: absolute; right: 0; top: 0; width: 8px; height: 144px; background: #282931; border-radius: 4px; }
    .sq { position: absolute; right: -1px; bottom: 0; width: 9px; height: 9px; background: #fff; border: 1px solid #888; }
    .filters { width: 33px; background: #fff; border-right: 1px solid #d9d7d5; padding: 10px 0 0 10px; display: flex; flex-direction: column; }
    .funnel { margin-top: 19px; }
    .vert { writing-mode: vertical-rl; font-size: 14px; height: 42px; width: 14px; line-height: 14px; margin-top: 9px; }
    .pages { height: 35px; display: flex; border-left: 1px solid #d9d7d5; }
    .arrows { width: 39px; display: flex; align-items: center; justify-content: space-between; padding: 0 7px 0 6px; color: #b3b0ad; }
    .page { height: 35px; display: flex; align-items: center; justify-content: center; border-right: 1px solid #c8c6c4; font-size: 11.500px; }
    .page.cur { background: #fff; border-bottom: 4px solid #f2c811; padding-top: 4px; border-left: 1px solid #c8c6c4; }
    .add { width: 40px; height: 32px; margin-top: 2px; background: #f2c811; display: flex; align-items: center; justify-content: center; }
    .viz { width: 181px; border-right: 1px solid #d9d7d5; display: flex; flex-direction: column; }
    .ptitle { height: 38px; display: flex; align-items: center; justify-content: space-between; padding: 0 8px; font-size: 15px; }
    .bv { padding-left: 8px; height: 17px; line-height: 16px; font-size: 12px; }
    .modes { display: flex; padding: 2px 8px 0; height: 36px; }
    .mode { width: 32px; height: 32px; background: #d2d0ce; border-radius: 2px; margin-right: 39px; display: flex; align-items: center; justify-content: center; }
    .mode2 { padding-top: 4px; }
    .vgrid { display: grid; grid-template-columns: repeat(6, 28px); grid-auto-rows: 28px; padding: 14px 0 0 10px; height: 208px; }
    .cgrid { display: grid; grid-template-columns: repeat(6, 28px); grid-auto-rows: 28.500px; margin: 0 6px; padding: 8px 0 0 3px; height: 67px; border-top: 1px dashed #d2d0ce; }
    .vfields { border-top: 1px solid #d9d7d5; padding: 9px 6px 0 4px; font-size: 12px; flex: 1; }
    .vlab { padding-left: 8px; line-height: 18px; height: 22px; }
    .drop { height: 28px; background: #fff; border: 1px dashed #bdbbb9; display: flex; align-items: center; padding-left: 10px; }
    .drop.two { height: 27px; padding-left: 8px; margin-top: 3px; }
    .opt { height: 24px; display: flex; align-items: center; justify-content: space-between; padding-left: 8px; }
    .opt.head { height: 27px; margin-top: 5px; }
    .opt.keep { height: 30px; }
    .tog { width: 32px; height: 16px; border: 1px solid #605e5c; border-radius: 8px; background: #fff; font-size: 9.500px; display: flex; align-items: center; gap: 2px; padding-left: 4px; }
    .tog.yes { background: #605e5c; color: #fff; }
    .knob { width: 8px; height: 8px; border-radius: 50%; background: #605e5c; }
    .yes .knob { background: #fff; }
    .fields { width: 180px; }
    .fsearch { margin: 7px 4px 9px; width: 172px; height: 27px; background: #fff; border: 1px solid #605e5c; border-radius: 2px; display: flex; align-items: center; gap: 7px; padding-left: 7px; font-size: 13px; color: #605e5c; }
    .frow { height: 24px; display: flex; align-items: center; padding-left: 10px; font-size: 12px; color: #3b3a39; }
    .fic { width: 20px; margin-left: 5px; }
    .status { height: 23px; background: #f3f2f1; font-size: 11.500px; color: #3b3a39; }
    .task { height: 41px; background: linear-gradient(90deg, #1c2023, #262220 28%, #1d2023 45%, #1d2126 60%, #262524 75%, #262422); display: flex; color: #fff; }
    .app { width: 49px; height: 41px; display: flex; align-items: center; justify-content: center; flex: none; padding-right: 2px; }
    .app.run, .app.act { border-bottom: 2px solid #76b9ed; padding-top: 2px; }
    .app.run { width: 41px; margin: 0 4px; }
    .app.act { background: #4b4d50; }
    .tray { display: flex; align-items: center; }
    .clock { display: flex; flex-direction: column; align-items: center; line-height: 17px; }
  `;

  firstUpdated() {
    this.renderRoot.querySelectorAll<HTMLElement>("[data-w]").forEach((el) => {
      const want = Number(el.dataset.w);
      const vertical = el.classList.contains("vert");
      const range = document.createRange();
      range.selectNodeContents(el);
      const r = range.getBoundingClientRect();
      const n = (el.textContent || "").length;
      if (n > 1) el.style.letterSpacing = `${(want - (vertical ? r.height : r.width)) / n}px`;
    });
  }

  titleBar() {
    return html`<div class="title row">${cells(0, [
      [17, ico(16, 16, svg`<path d="M1 1h12l2 2v12H1zM4 1v5h8V1M5 15v-4h6v4M8 15v-2" stroke="#d2d0ce" stroke-width="1.500"/>`)],
      [48, ico(14, 16, svg`<path d="M1 2v5h5M1.500 6.500Q5 2 9 3q4 1.500 3.500 5Q12 10 7 15" stroke="#6e6c6a" stroke-width="1.500"/>`)],
      [78, ico(14, 16, svg`<path d="M13 2v5H8M12.500 6.500Q9 2 5 3 1 4.500 1.500 8 2 10 7 15" stroke="#6e6c6a" stroke-width="1.500"/>`)],
      [266, t("Learning_BI - Power BI Desktop", 165)],
      [729, html`<div class="tsearch row">${glass(16, "#3b3a39")}${t("Search", 41)}</div>`],
      [1646, t("Ruwaid Abuhmoud", 101)],
      [1757, html`<div class="avatar"></div>`],
      [1805, ico(10, 10, svg`<path d="M0 5.500h10" stroke="#fff"/>`)],
      [1849, ico(10, 10, svg`<path d="M.5 2.500h7v7h-7zM2.500 2.500v-2h7v7h-2" stroke="#fff"/>`)],
      [1893, ico(10, 10, svg`<path d="m0 0 10 10M10 0 0 10" stroke="#fff" stroke-width="1.300"/>`)],
    ], 1920)}</div>`;
  }

  ribbon() {
    return html`<div class="menu row">${cells(0, [
      [23, t("File", 20)], [81, html`<div class="underlined">${t("Home", 38, "bold")}</div>`], [150, t("Insert", 35)], [217, t("Modeling", 58)],
      [308, t("View", 29)], [369, t("Help", 27)], [429, t("External Tools", 84)],
    ], 1920)}</div>
    <div class="tools row">${cells(0, [
      [20, tb.paste], [43, chev("#a19f9d")], [68, tb.brush], [101, sep], [118, tb.data], [146, t("Get data", 52)], [205, chev()], [231, tb.excel],
      [270, tb.hub], [311, tb.sql], [349, tb.enter], [389, tb.verse], [431, tb.recent], [453, chev()], [473, sep], [487, tb.transform], [512, chev()],
      [537, tb.refresh], [565, t("Refresh", 45)], [626, sep], [642, tb.visual], [672, t("New visual", 66)], [759, tb.textbox], [801, tb.more],
      [830, t("More visuals", 77)], [914, chev()], [931, sep], [948, tb.calc], [976, t("New measure", 84)], [1081, tb.quick], [1116, sep],
      [1133, tb.sens], [1160, t("Sensitivity", 63, "dim")], [1228, chev("#bdbbb9")], [1247, sep], [1263, tb.publish], [1293, t("Publish", 44)],
      [1353, sep], [1905, html`<svg class="ico" width="10" height="30" fill="none" stroke=${K} stroke-width="2"><path d="m1 26 4 4 4-4"/></svg>`],
    ], 1920)}</div>`;
  }

  scatter() {
    const xs = [137.300, 227, 316.300, 405.600, 495];
    return html`<svg class="scatter" width="451" height="702" viewBox="${X0} ${Y0} 451 702" fill="none">
      ${st(134, 243, 303, "Total Profit and WinRate by Team Name", 16)}
      ${xs.map((x) => svg`<path d="M${x} 270V882" stroke="#a7a8ae" stroke-width="1.200" stroke-dasharray="1.500 5"/>`)}
      ${[["100%", 95, 270], ["80%", 101.500, 392], ["60%", 101.500, 514], ["40%", 101.500, 637], ["20%", 101.500, 759], ["0%", 108, 882]].map(
        ([s, x, y]) => st(x as number, y as number, 126 - (x as number), s as string, 12))}
      <clipPath id="plot"><path d="M130 268h372v614H130z"/></clipPath>
      <g clip-path="url(#plot)">${dots.map(([x, y, c]) => svg`<circle cx=${x} cy=${y} r="7" fill=${c === "g" ? "#0be04c" : c === "r" ? "#d32b52" : "#f22c5a"}/>`)}</g>
      <path d="m405 269 18 20M319 576l17 19" stroke="#b5b6bb"/>
      <path d="M135.500 556H491" stroke="#ffb000" stroke-width="3" stroke-dasharray="4 2.130"/>
      ${dotLabels.map(([x, y, w, s]) => st(x, y - 1, w, s, 13))}
      <path d="M319 268V881" stroke="#ffb000" stroke-width="3.600" stroke-dasharray="5.500 5.350"/>
      ${st(123, 894, 29, "($10)", 12)}${st(216, 894, 22, "($5)", 12)}${st(310, 894, 13, "$0", 12)}${st(398.500, 894, 13.500, "$5", 12)}${st(485, 894, 20, "$10", 12)}
      ${st(275, 917, 82, "Total Profit", 16)}
      <g transform="translate(74 607) rotate(-90)">${st(0, 0, 64, "WinRate", 15.500)}</g>
    </svg>`;
  }

  roi() {
    return html`<svg class="roi" width="276" height="130" viewBox="946 110 276 130" fill="none">
      ${st(980.500, 142.800, 170, "ROI and Target ROI", 18.500)}${st(1006, 182, 55, "40.00%", 16)}
      <path d="M1035.500 229A30.700 30.700 0 0 1 1066 198.300" stroke="#109c1c" stroke-width="11.500"/>
      <path d="M1066 198.300A30.700 30.700 0 0 1 1096.700 229" stroke="#f3f2f1" stroke-width="11.500"/>
      <path d="m1062.500 192 .8 12" stroke="#0b3d14" stroke-width="2"/>
      ${st(993, 223, 31, "0.00", 16)}${st(1107, 223, 32, "0.86", 16)}${st(1057, 222, 18.500, "0.43", 10.500)}
    </svg>`;
  }

  bookmaker() {
    return html`<div class="book">${t("Bookmaker", 100, "hd")}
      <div class="bookin"><svg width="178" height="90" viewBox="1273 166 178 90">
        <rect x="1273" y="166.500" width="178" height="89" fill="#1e2228" stroke="#aaa"/>
        <circle cx="1362" cy="197" r="21.500" fill="#1e2228" stroke="#b98c16" stroke-width="1.800"/>
        <circle cx="1362" cy="197" r="17" fill="#fff" stroke="#e3a917" stroke-width="3"/>
        <path d="m1351 187 6-4 6 4v8l-5 3-6-4zM1359 196l7-4 5 4v7l-6 4-6-4z" fill="#3a3220"/>
        <path d="m1351 187 6 4 6-4M1357 191v7M1359 196l6 4 6-4M1365 200v7" stroke="#c9a24b" stroke-width=".8" fill="none"/>
        <text x="1310" y="236.500" font-family="Open Sans" font-weight="800" font-style="italic" font-size="16.500" fill="#fff" textLength="42" lengthAdjust="spacingAndGlyphs">CSGO</text>
        <text x="1355" y="236.500" font-family="Open Sans" font-weight="800" font-style="italic" font-size="16.500" fill="#e9ae18" textLength="58" lengthAdjust="spacingAndGlyphs">EMPIRE</text>
      </svg>${t("CsgoEmpire", 79)}</div></div>`;
  }

  tree() {
    const node = (x: number, y: number) => svg`<rect x=${x + 0.5} y=${y + 0.5} width="141" height="11" fill="#fff" stroke="#ccc"/>`;
    const plus = (y: number) => svg`<path d="M904 ${y}h11M909.500 ${y - 5.500}v11" stroke="#c8c6c4" stroke-width="1.200"/>`;
    return html`<svg class="treesvg" width="710" height="287" viewBox="528 429 710 287" fill="none">
      <path d="M702 551C712 520 735 489 755 489M702 557C712 588 735 619 755 619" stroke="#d8d8d8" stroke-width="1.200"/>
      <path d="M702 554h53" stroke="#ddd" stroke-width="1.500" stroke-dasharray="2 2"/>
      ${node(560, 548)}${node(755, 483)}${node(755, 548)}${node(755, 613)}${plus(487.500)}${plus(552.500)}${plus(617.500)}
      ${st(761, 504.500, 18, "Big", 12)}${st(761, 520.500, 48, "100.00%", 12)}
      ${st(761, 569.500, 70, "Complexity", 12.500, "bold")}${st(761, 586, 48, "100.00%", 12)}
      ${st(761, 634.500, 32, "Mouz", 12)}${st(761, 651, 48, "100.00%", 12)}
      ${st(566, 569.500, 52, "WinRate", 12.500, "bold")}${st(566, 586, 41, "51.81%", 12)}
      <path d="m815.500 677 7.500 8 7.500-8" stroke="#c8c6c4" stroke-width="1.400"/>
    </svg>`;
  }

  canvas() {
    return html`<div class="canvas">
      <svg class="specks" width="1480" height="832" stroke="#262833" fill="none" stroke-dasharray="1 7.700">
        ${[104, 208, 312, 416, 520, 624, 728].map((y) => svg`<path d="M9 ${y + 0.5}H1480"/>`)}
        ${[...Array(14)].map((_, i) => svg`<path d="M${104.500 + i * 104} 9V832"/>`)}
      </svg>
      <div class="lcol">
        <div class="lrow"><div class="blank"></div><div class="kpi shift">${t("83", 26, "big")}${t("Number of Bets", 101, "cap")}</div></div>
        ${this.scatter()}
      </div>
      <div class="rcol">
        <div class="rowa">
          <div class="aleft">
            <div class="atop"><div class="kpi">${t("95", 27, "big")}${t("Days Invested", 88, "cap")}</div>
              <div class="kpi wide">${t("1.96", 44, "big")}${t("Average Odd", 84, "cap")}</div>${this.roi()}</div>
            <div class="finder row">${cells(511, [
              [568, html`<div class="lab">${t("Team Name :", 84)}</div>`],
              [708, html`<div class="box">${t("Search", 46)}${ico(14, 14, svg`<circle cx="6" cy="5.500" r="4.700" stroke="#8a8886"/><path d="m9.500 9 4 4.500" stroke="#8a8886" stroke-width="1.200"/>`)}</div>`],
              [1032, html`<div class="erase">${ico(16, 12, svg`<path d="M6 1h9.500l-5.500 9.500H.7z" fill="#a6a4a2" stroke="#c8c6c4"/><path d="M3.500 6h6L7 10.300H1z" fill="#121525" stroke="#c8c6c4"/>`)}</div>`],
            ], 1222)}</div>
          </div>
          ${this.bookmaker()}
        </div>
        <div class="rowb">
          <div class="ana"><div class="hd">${t("Invemsent Analsis", 160)}</div>
            <div class="tree"><div class="thead">${ico(11, 16, svg`<path d="M3 11Q1 8 1 5.500a4.500 4.500 0 0 1 9 0Q10 8 8 11zM3.500 13h4M4 15h3" stroke="#c8c6c4" stroke-width="1.200"/>`)}
              <div class="lvl">${t("Team Name", 91)}${ico(10, 10, svg`<path d="m1 2 8 8M9 2 1 10" stroke="#a8a6a4" stroke-width="1.300"/>`)}</div></div>${this.tree()}</div>
          </div>
          <div class="side">
            <div class="btn">${t("Show Invesment Profit", 143)}</div>
            <div class="slicer"><div class="row">${t("Invesment Ref", 82)}${ico(10, 6, svg`<path d="m0 0 5 5.500L10 0" stroke="#4d505e"/>`)}</div>
              <div class="tiles"><div class="tile sel">1</div><div class="tile">2</div></div></div>
            <div class="btn">${t("Show Invesment Influncer", 164)}</div>
          </div>
        </div>
        <div class="last"><div class="hd">${t("Last 10 Bets", 106)}</div>
          <div class="lbody"><div class="strip">${bets.map(([n, nw, d, dw, b, bw2, s, sw, logo]) => html`<div class="bet">
            <div class="top">${t(n, nw, "semi")}<span class="badge"><svg class="ico" width="30" height="30" fill="none"><circle cx="15" cy="15" r="15" fill="#f4f4f4"/>${logo}</svg></span></div>
            ${t(d, dw, "date")}${t(b, bw2, "a")}${t(s, sw, "b")}</div>`)}</div>
            <div class="hs"></div><div class="vs"></div><div class="sq"></div></div>
        </div>
      </div>
    </div>`;
  }

  dbl(right: boolean) {
    return ico(13, 13, right ? svg`<path d="m.8.800 5.500 5.700-5.500 5.700M6.500.800 12 6.500l-5.500 5.700"/>` : svg`<path d="M6.500.800 1 6.500l5.500 5.700M12.200.800 6.700 6.500l5.500 5.700"/>`);
  }

  vizPane() {
    return html`<div class="viz">
      <div class="ptitle">${t("Visualizations", 98, "semi")}${this.dbl(true)}</div>
      <div class="bv">${t("Build visual", 62, "semi")}</div>
      <div class="modes">
        <div class="mode">${ico(24, 24, svg`<path d="M0 .8h19" stroke-width="1.300"/><path d="M.5 5.500h23v7H.5zM.5 16.500h23v7H.5z" fill="#f2c811" stroke-dasharray="2 1"/>`)}</div>
        <div class="mode2">${ico(24, 24, svg`<path d="M12 23.500H.7V.700h12l5 5V9M12.700.700v5h5" stroke-width="1.300"/><path d="M23 9.500 15 18l-2-1.500zM12.500 16.500q3 1 2.500 3.500-2 4-7.500 2.500 2-.5 2-2.500.5-3 3-3.500z"/>`)}</div>
      </div>
      <svg class="ico" width="180" height="10" fill="none" stroke="#8a8886"><path d="M0 9.500h15.500L24 1l8.500 8.500H180"/></svg>
      <div class="vgrid">${vizIcons.map((i) => ico(19, 18, i))}</div>
      <div class="cgrid">${customIcons.map((i) => ico(20, 20, i))}</div>
      <div class="vfields">
        <div class="vlab">${t("Values", 34)}</div>
        <div class="drop">${t("Add data fields here", 107)}</div>
        <div class="opt head">${t("Drill through", 70, "semi")}</div>
        <div class="opt">${t("Cross-report", 67)}<div class="tog"><span class="knob"></span>${t("Off", 13)}</div></div>
        <div class="opt keep">${t("Keep all filters", 74)}<div class="tog yes">${t("On", 12, "semi")}<span class="knob"></span></div></div>
        <div class="drop two">${t("Add drill-through fields here", 151)}</div>
      </div></div>`;
  }

  fieldsPane() {
    return html`<div class="fields">
      <div class="ptitle">${t("Fields", 41, "semi")}${this.dbl(true)}</div>
      <div class="fsearch">${glass(14, "#605e5c")}${t("Search", 41)}</div>
      ${fieldRows.map(([s, w, k]) => html`<div class="frow">${ico(7, 12, svg`<path d="m.8.500 5 5.500-5 5.500" stroke="#8a8886" stroke-width="1.100"/>`)}
        <span class="fic">${ico(16, 16, fieldIcons[k])}</span>${t(s, w)}</div>`)}
    </div>`;
  }

  render() {
    return html`${this.titleBar()}${this.ribbon()}
      <div class="body">
        <div class="rail">
          <div class="on">${ico(16, 16, svg`<path d="M1 0v14.500h14M4 7h2.500v7H4zM8 4h2.500v10H8zM12 1.500h2.500V14H12z" stroke="#252423" stroke-width="1.100"/>`)}</div>
          <div>${ico(16, 16, svg`<g stroke="#797775"><path d="M.5 1h15v3H.5z" fill=${G}/>${grid(0.5, 1, 15, 14)}</g>`)}</div>
          <div>${ico(18, 17, svg`<path d="M9.500 1h7v6h-7zM9.500 11h7v5h-7zM1 5h6v7H1zM7 7h2V4M7 10h1v3h1.500" stroke="#797775" stroke-width="1.300"/>`)}</div>
        </div>
        <div class="center">
          <div class="work">
            <div class="zone"><div class="zonein">${this.canvas()}</div></div>
            <div class="filters">${this.dbl(false)}
              <svg class="ico funnel" width="14" height="12" fill="none" stroke=${K} stroke-width="1.200"><path d="M13 .7v10.600L8 7.500H1.500L4 4.500h4z"/></svg>
              ${t("Filters", 42, "vert semi")}</div>
          </div>
          <div class="pages">
            <div class="arrows">${ico(5, 9, f("M5 0v9L0 4.500z", "#c8c6c4"))}${ico(5, 9, f("M0 0v9l5-4.500z", "#c8c6c4"))}</div>
            ${pages.map(([s, w, cw], i) => html`<div class="page ${i ? "" : "cur"}" style="width:${cw}px">${t(s, w, i ? "" : "semi")}</div>`)}
            <div class="add">${ico(11, 11, svg`<path d="M5.500 0v11M0 5.500h11" stroke="#7d6d2a" stroke-width="2.200"/>`)}</div>
          </div>
        </div>
        ${this.vizPane()}${this.fieldsPane()}
      </div>
      <div class="status row">${cells(0, [
        [5, t("Page 1 of 8", 60)],
        [1703, ico(5, 5, svg`<path d="M0 3h4" stroke-width="1.500"/>`)],
        [1712, ico(100, 12, svg`<path d="M0 6h100" stroke="#605e5c"/><path d="M52 0v12" stroke-width="3"/>`)],
        [1818, ico(8, 8, svg`<path d="M4 0v8M0 4h8" stroke="#605e5c"/>`)],
        [1840, t("108%", 29)],
        [1889, ico(16, 12, svg`<path d="M.5.500h15v11H.5zM3 4.500V3h2M11 3h2v1.500M13 7.500V9h-2M5 9H3V7.500"/>`)],
      ], 1920)}</div>
      <div class="task">
        ${apps.map((a, i) => html`<div class="app ${i === 3 ? "run" : i === 13 ? "act" : ""}"><svg class="ico" width="22" height="22" viewBox="0 0 24 24" fill="none">${a}</svg></div>`)}
        <div class="tray">${cells(1225, [
          [1628, html`<svg class="ico" width="14" height="14" viewBox="0 0 24 24" fill="none">${chrome()}</svg>`],
          [1651, ico(17, 14, svg`<path d="M.7 4.500h2.500L6 1.500v11L3.200 9.500H.7zM8.500 4.500q2 2.500 0 5M11 3q3 4 0 8M13.500 1.500q4 5.500 0 11" stroke="#fff"/>`)],
          [1675, ico(16, 16, svg`${f("M0 0h16v16H0z", "#151715")}${f("M7 4.500h6v7H7z", "#76b900")}<path d="M2.500 8q3-4 6-2 2 2-1 4-3 1-5-2z" fill="#151715" stroke="#76b900"/><circle cx="6.500" cy="8" r="1" fill="#76b900" stroke="none"/>`)],
          [1699, ico(16, 16, svg`${f("M8 0q3 2 7 2 0 9-7 14Q1 11 1 2q4 0 7-2z", W)}<path d="M8 1v14M1 7.500h14" stroke="#222"/>${f("m11 7 5 9H6.500z", "#fcb813")}<path d="M11.200 10v3M11.200 14v1.200" stroke="#222"/>`)],
          [1722, ico(17, 14, svg`<path d="M5.500 4.500h11v8h-11zM8 6.500h6v4H8zM3 4v3H1V3M4 1v3M1.500 1v3M3 7v5h2.500" stroke="#fff" stroke-width="1.200"/>`)],
          [1747, ico(17, 14, svg`<path d="M4 2.500h12v8H4M10 10.500v3M6.500 13.500h7M.7.700h4v4h-4zM2.500 5v7" stroke="#fff" stroke-width="1.200"/>`)],
          [1773, t("ENG", 23)],
          [1811, html`<div class="clock">${t("2:08 AM", 43)}${t("6/9/2022", 46)}</div>`],
          [1879, ico(16, 16, svg`<path d="M.7.700h14.600v11.500h-4.500L8 15.500l-2.500-3.300H.7z" stroke="#fff" stroke-width="1.300"/>`)],
        ], 1920)}</div>
      </div>`;
  }
}
